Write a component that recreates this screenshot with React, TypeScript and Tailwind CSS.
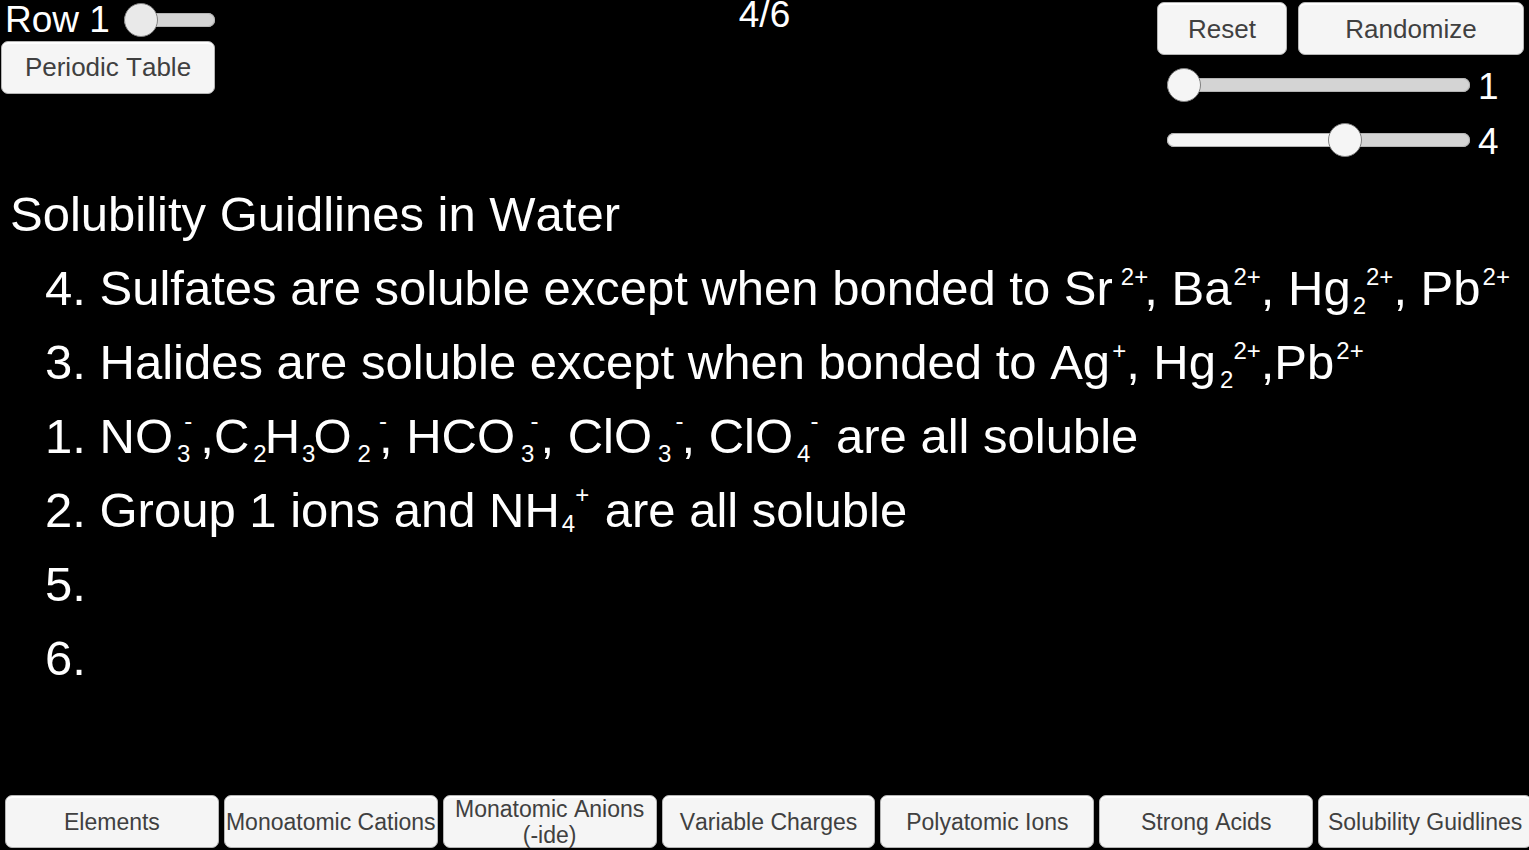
import { Fragment, useState } from "react";
import type { ReactNode } from "react";
import { clsx } from "clsx";

const BUTTON =
  "h-[53px] rounded-[7px] border border-[#b4b4b4] bg-[#f5f5f5] text-center text-[#404040] shadow-[inset_0_2px_0_#ffffff] hover:bg-white";

const RANGE =
  "block h-[34px] min-w-0 cursor-pointer appearance-none bg-transparent " +
  "[&::-webkit-slider-runnable-track]:h-[14px] [&::-webkit-slider-runnable-track]:rounded-full " +
  "[&::-webkit-slider-runnable-track]:shadow-[inset_0_0_0_1px_#b4b4b4] " +
  "[&::-webkit-slider-runnable-track]:[background:linear-gradient(to_right,#f5f5f5_var(--fill),#d4d4d4_var(--fill))] " +
  "[&::-webkit-slider-thumb]:-mt-[10px] [&::-webkit-slider-thumb]:size-[34px] [&::-webkit-slider-thumb]:appearance-none " +
  "[&::-webkit-slider-thumb]:rounded-full [&::-webkit-slider-thumb]:border [&::-webkit-slider-thumb]:border-[#808080]";

type SliderProps = {
  id: string;
  label?: string;
  value: number;
  max: number;
  onChange: (value: number) => void;
  className: string;
};

function Slider({ id, label, value, max, onChange, className }: SliderProps) {
  const fill = `${((value - 1) / (max - 1)) * 100}%`;
  return (
    <input
      id={id}
      type="range"
      aria-label={label}
      min={1}
      max={max}
      value={value}
      onChange={(e) => onChange(Number(e.target.value))}
      style={{ ["--fill" as string]: fill }}
      className={clsx(RANGE, className)}
    />
  );
}

type ScriptProps = { children: ReactNode; high?: boolean; className?: string };

function Sub({ children, high, className }: ScriptProps) {
  return (
    <span
      className={clsx(
        "inline-block text-[24px] leading-none",
        high ? "align-[-5px]" : "align-[-9px]",
        className,
      )}
    >
      {children}
    </span>
  );
}

function Sup({ children, high, className }: ScriptProps) {
  return (
    <span
      className={clsx(
        "inline-block text-[24px] leading-none",
        high ? "align-[24px]" : "align-[20px]",
        className,
      )}
    >
      {children}
    </span>
  );
}

const GUIDELINES: { number: number; text: ReactNode }[] = [
  {
    number: 4,
    text: (
      <>
        Sulfates are soluble except when bonded to Sr
        <Sup className="-mr-1 ml-2">2+</Sup>, Ba<Sup className="ml-0.5">2+</Sup>, Hg
        <Sub className="ml-0.5">2</Sub>
        <Sup>2+</Sup>, Pb<Sup className="ml-0.5">2+</Sup>
      </>
    ),
  },
  {
    number: 3,
    text: (
      <>
        Halides are soluble except when bonded to Ag
        <Sup className="ml-0.5">+</Sup>, Hg<Sub className="ml-1">2</Sub>
        <Sup>2+</Sup>,Pb<Sup className="ml-0.5">2+</Sup>
      </>
    ),
  },
  {
    number: 1,
    text: (
      <>
        NO<Sub className="ml-1">3</Sub>
        <Sup high className="-ml-1.5 mr-2">-</Sup>,C
        <Sub className="ml-1 -mr-0.5">2</Sub>H<Sub className="ml-0.5 -mr-0.5">3</Sub>O
        <Sub className="ml-1.5">2</Sub>
        <Sup high className="-mr-2 ml-2">-</Sup>, HCO<Sub className="ml-1.5">3</Sub>
        <Sup high className="-ml-1 mr-0.5">-</Sup>, ClO<Sub className="ml-1.5">3</Sub>
        <Sup high className="-mr-0.5 ml-1">-</Sup>, ClO<Sub className="ml-1">4</Sub>
        <Sup high className="mr-1">-</Sup> are all soluble
      </>
    ),
  },
  {
    number: 2,
    text: (
      <>
        Group 1 ions and NH<Sub high className="ml-0.5">4</Sub>
        <Sup high className="mr-0.5">+</Sup> are all soluble
      </>
    ),
  },
  { number: 5, text: null },
  { number: 6, text: null },
];

const TOPICS = [
  ["Elements"],
  ["Monoatomic Cations"],
  ["Monatomic Anions", "(-ide)"],
  ["Variable Charges"],
  ["Polyatomic Ions"],
  ["Strong Acids"],
  ["Solubility Guidlines"],
];

export default function App() {
  const [row, setRow] = useState(1);
  const [first, setFirst] = useState(1);
  const [last, setLast] = useState(4);

  return (
    <div className="flex min-h-screen flex-col overflow-hidden bg-black font-['Liberation_Sans',Arial,sans-serif] text-white [font-kerning:none]">
      <header className="grid grid-cols-[1fr_auto_1fr] items-start">
        <div className="w-[215px] pl-px">
          <div className="flex h-[41px] items-center pb-[2px] pl-1">
            <label htmlFor="row" className="flex-1 whitespace-nowrap text-[37px] leading-[39px]">
              Row {row}
            </label>
            <Slider
              id="row"
              value={row}
              max={7}
              onChange={setRow}
              className="w-[91px] [&::-webkit-slider-thumb]:bg-[#e9e9e9]"
            />
          </div>
          <button type="button" className={clsx(BUTTON, "w-full text-[26px]")}>
            Periodic Table
          </button>
        </div>

        <p className="text-[37px] leading-[30px]">4/6</p>

        <div className="flex flex-col items-end gap-[2px] pt-[2px]">
          <div className="flex gap-[11px] pr-[5px] text-[26px]">
            <button type="button" className={clsx(BUTTON, "w-[130px] pt-0.5")}>
              Reset
            </button>
            <button type="button" className={clsx(BUTTON, "w-[226px] pt-0.5")}>
              Randomize
            </button>
          </div>
          <div className="w-[362px] text-[37px] leading-[38px]">
            <div className="flex h-[55px] items-center gap-2">
              <Slider
                id="first"
                label="First item"
                value={first}
                max={6}
                onChange={setFirst}
                className="w-[303px] [&::-webkit-slider-thumb]:bg-[#f5f5f5]"
              />
              <output htmlFor="first" className="pt-1">
                {first}
              </output>
            </div>
            <div className="flex h-[55px] items-center gap-2">
              <Slider
                id="last"
                label="Last item"
                value={last}
                max={6}
                onChange={setLast}
                className="w-[303px] [&::-webkit-slider-thumb]:bg-[#f5f5f5]"
              />
              <output htmlFor="last" className="pt-1">
                {last}
              </output>
            </div>
          </div>
        </div>
      </header>

      <main className="mt-2.5 flex-1 whitespace-nowrap text-[49px] leading-[74px]">
        <h1 className="pl-2.5">Solubility Guidlines in Water</h1>
        <ol className="pl-[45px]">
          {GUIDELINES.map(({ number, text }) => (
            <li key={number} className="h-[74px]">
              {number}. {text}
            </li>
          ))}
        </ol>
      </main>

      <nav className="-mr-[3px] ml-[5px] grid grid-cols-7 gap-[5px] pb-[2px] text-[23px] leading-[26px]">
        {TOPICS.map((lines) => (
          <button key={lines[0]} type="button" className={clsx(BUTTON, "min-w-0 whitespace-nowrap")}>
            {lines.map((line, i) => (
              <Fragment key={line}>
                {i > 0 && <br />}
                {line}
              </Fragment>
            ))}
          </button>
        ))}
      </nav>
    </div>
  );
}
